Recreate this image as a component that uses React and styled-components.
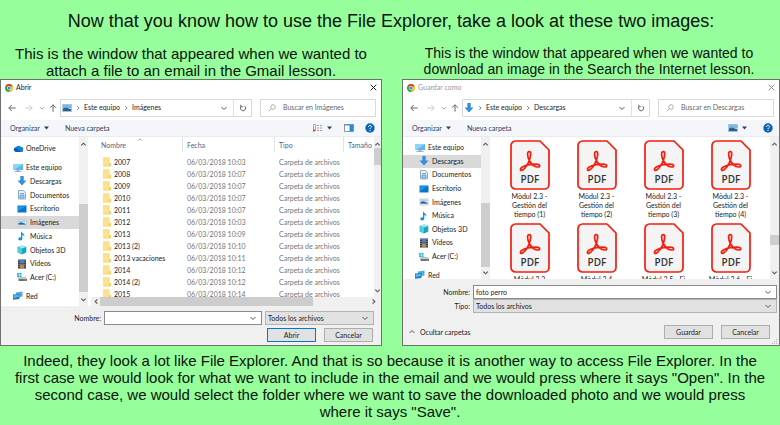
import React from "react";
import styled, { createGlobalStyle, css } from "styled-components";

const GlobalStyle = createGlobalStyle`
  *, *::before, *::after { box-sizing: border-box; }
  body {
    margin: 0;
    background: #96ff9b;
    color: #0b130b;
    font-family: "Liberation Sans", Arial, sans-serif;
  }
  svg { display: block; flex: none; }
`;

/* ---------- lesson page ---------- */

const Page = styled.main`
  display: flex;
  flex-direction: column;
  overflow: hidden;
`;

const Title = styled.h1`
  margin: 0;
  padding: 10px 0 0 2px;
  font-size: 18px;
  line-height: 22px;
  font-weight: 400;
  text-align: center;
`;

const Comparison = styled.section`
  display: grid;
  grid-template-columns: 382fr 378fr;
  column-gap: 20px;
  padding-top: 13px;
`;

const Example = styled.figure`
  margin: 0;
  min-width: 0;
  display: flex;
  flex-direction: column;
`;

const Caption = styled.figcaption`
  height: 34px;
  text-align: center;
  font-size: ${(p) => (p.$compact ? 14 : 15)}px;
  line-height: ${(p) => (p.$compact ? 16 : 17)}px;
  padding: ${(p) => (p.$compact ? "0 18px 0 14px" : "0 12px")};
`;

const Conclusion = styled.p`
  margin: 0;
  padding: 6px 14px 5px;
  font-size: 15px;
  line-height: 17px;
  text-align: center;
`;

/* ---------- dialog frame ---------- */

const Dialog = styled.section`
  display: flex;
  flex-direction: column;
  border: 1px solid #6f716f;
  background: #fff;
  color: #1c1c1c;
  font-family: Lato, "Open Sans", sans-serif;
  font-size: 7px;
  line-height: 9px;

  button, input, select { font: inherit; color: inherit; }
`;

const TitleBar = styled.header`
  display: flex;
  align-items: center;
  gap: 3px;
  height: 15px;
  padding: 0 4px;
  color: ${(p) => (p.$inactive ? "#999" : "#222")};
`;

const TitleText = styled.span`
  flex: 1;
`;

const PlainButton = styled.button`
  display: flex;
  align-items: center;
  justify-content: ${(p) => p.$justify || "center"};
  gap: 4px;
  min-width: ${(p) => p.$width || 0}px;
  padding: 0;
  border: 0;
  background: none;
`;

const AddressRow = styled.nav`
  display: flex;
  align-items: center;
  gap: 8px;
  height: 25px;
  padding: 0 5px 0 2px;
`;

const Arrows = styled.div`
  display: grid;
  grid-template-columns: 17px 17px 9px 14px;
  margin-right: -8px;
`;

const AddressBox = styled.div`
  flex: 1;
  display: flex;
  align-items: center;
  height: 18px;
  border: 1px solid #d9d9d9;
  padding-left: 1px;
`;

const Crumb = styled.a`
  color: #1c1c1c;
  text-decoration: none;
`;

const CrumbArrow = styled.span`
  width: 12px;
  display: flex;
  justify-content: center;
`;

const Spacer = styled.div`
  flex: 1;
`;

const RefreshButton = styled(PlainButton)`
  align-self: stretch;
  width: 18px;
  border-left: 1px solid #e1e1e1;
`;

const SearchBox = styled.label`
  display: flex;
  align-items: center;
  gap: 7px;
  width: 116px;
  height: 18px;
  padding-left: 7px;
  border: 1px solid #d9d9d9;
`;

const SearchInput = styled.input`
  flex: 1;
  min-width: 0;
  padding: 0;
  border: 0;
  outline: 0;
  background: none;
  &::placeholder { color: #686868; opacity: 1; }
`;

const Toolbar = styled.div`
  display: flex;
  align-items: center;
  height: 17px;
  padding: 0 6px 0 9px;
  background: #f4f6f9;
  border-bottom: 1px solid #e9ebee;
  color: #2a3f66;
`;

const ToolbarItem = styled(PlainButton)`
  margin-left: ${(p) => p.$before || 0}px;
`;

/* ---------- dialog body ---------- */

const Body = styled.div`
  display: flex;
  height: ${(p) => p.$height}px;
  overflow: hidden;
`;

const Tree = styled.ul`
  display: flex;
  flex-direction: column;
  flex: none;
  width: 78px;
  height: calc(100% + ${(p) => p.$overflow || 0}px);
  margin: 0;
  padding: ${(p) => p.$padding};
  list-style: none;
`;

const TreeRow = styled.li`
  flex: 1 1 0;
  display: flex;
  margin-top: ${(p) => p.$before || 0}px;
  background: ${(p) => (p.$selected ? "#d9d9d9" : "transparent")};
`;

const TreeLink = styled.a`
  flex: 1;
  display: flex;
  align-items: center;
  gap: 3px;
  padding-left: ${(p) => (p.$nested ? 16 : 12)}px;
  color: #1c1c1c;
  text-decoration: none;
  white-space: nowrap;
`;

const ScrollTrack = styled.div`
  flex: none;
  display: flex;
  align-items: center;
  justify-content: space-between;
  background: #f0f0f0;
  ${(p) =>
    p.$horizontal
      ? css`
          height: 9px;
          padding: 0 4px 0 2px;
        `
      : css`
          flex-direction: column;
          width: ${p.$width || 9}px;
          padding: 4px 0 3px;
        `}
`;

const ScrollRun = styled.div`
  flex: 1;
  align-self: stretch;
  display: flex;
  flex-direction: ${(p) => (p.$horizontal ? "row" : "column")};
`;

const Thumb = styled.div`
  background: #cdcdcd;
  flex: ${(p) => p.$share} 1 0;
`;

const ScrollGap = styled.div`
  flex: ${(p) => p.$share} 1 0;
`;

const ListPane = styled.div`
  flex: 1;
  min-width: 0;
  display: flex;
  flex-direction: column;
  padding-left: ${(p) => p.$inset || 0}px;
`;

const ListView = styled.div`
  flex: 1;
  min-height: 0;
  display: flex;
  overflow: hidden;
`;

const TableClip = styled.div`
  flex: 1;
  min-width: 0;
  overflow: hidden;
`;

const FileTable = styled.table`
  width: 100%;
  table-layout: fixed;
  border-collapse: separate;
  border-spacing: 0;
  white-space: nowrap;
`;

const HeadCell = styled.th`
  position: relative;
  width: ${(p) => (p.$width ? `${p.$width}px` : "auto")};
  height: 15px;
  padding: 2px 0 0 ${(p) => p.$pad}px;
  border-right: ${(p) => (p.$width ? "1px solid #e2e2e2" : "0")};
  color: #4d6484;
  font-weight: 400;
  text-align: left;
`;

const SortMark = styled.span`
  position: absolute;
  top: 0;
  left: 50%;
`;

const Cell = styled.td`
  height: 12px;
  padding: 0 0 0 ${(p) => p.$pad}px;
  color: #747474;
`;

const HeadGap = styled.td`
  height: 4px;
  padding: 0;
`;

const FileName = styled.span`
  display: flex;
  align-items: center;
  gap: 3px;
  color: #1c1c1c;
`;

const TileGrid = styled.div`
  flex: 1;
  min-width: 0;
  display: grid;
  grid-template-columns: repeat(4, 67px);
  grid-auto-rows: 83px;
  padding: 3px 0 0 6px;
  overflow: hidden;
`;

const Tile = styled.div`
  display: flex;
  flex-direction: column;
  align-items: center;
  text-align: center;
`;

const TileName = styled.span`
  width: 46px;
  margin-top: 2px;
`;

/* ---------- dialog footer ---------- */

const Footer = styled.footer`
  display: flex;
  flex-direction: column;
  background: #f0f0f0;
  padding: ${(p) => p.$padding};
`;

const FieldRow = styled.div`
  display: grid;
  grid-template-columns: ${(p) => p.$columns};
  align-items: center;
  column-gap: ${(p) => p.$gap}px;
`;

const FieldLabel = styled.label`
  text-align: right;
`;

const Combo = styled.div`
  display: grid;
  grid-template-columns: 1fr 12px;
  align-items: center;
  height: 14px;
  border: 1px solid ${(p) => (p.$grey ? "#b4b4b4" : "#8a8a8a")};
  background: ${(p) => (p.$grey ? "#e1e1e1" : "#fff")};

  > input, > select {
    grid-column: 1 / 3;
    grid-row: 1;
    width: 100%;
    min-width: 0;
    height: 12px;
    padding: 0 12px 0 2px;
    border: 0;
    outline: 0;
    appearance: none;
    background: none;
  }
  > svg {
    grid-column: 2;
    grid-row: 1;
    pointer-events: none;
  }
`;

const Actions = styled.div`
  display: flex;
  align-items: center;
  justify-content: flex-end;
  gap: 8px;
`;

const OpenActions = styled(Actions)`
  padding: 3px 1px 0 0;
`;

const SaveActions = styled.div`
  display: flex;
  align-items: center;
  padding: 12px 7px 0 5px;
`;

const ActionButton = styled.button`
  width: 49px;
  height: 14px;
  padding: 0;
  border: 1px solid ${(p) => (p.$primary ? "#0078d7" : "#adadad")};
  background: #e1e1e1;
`;

const Grip = styled.div`
  display: flex;
  justify-content: flex-end;
`;

/* ---------- icons ---------- */

const paths = {
  up: "M1.5 5 4 2.5 6.5 5",
  down: "M1.5 3 4 5.5 6.5 3",
  left: "M5 1.5 2.5 4 5 6.5",
  right: "M3 1.5 5.5 4 3 6.5",
};

const Chevron = ({ to, color = "#555", size = 8, weight = 1 }) => (
  <svg width={size} height={size} viewBox="0 0 8 8" fill="none" stroke={color} strokeWidth={weight}>
    <path d={paths[to]} />
  </svg>
);

const Caret = () => (
  <svg width="5" height="4" viewBox="0 0 5 4"><path d="M0 .5h5L2.5 3.5z" fill="#2a3f66" /></svg>
);

const Arrow = ({ turn = 0, color = "#666" }) => (
  <svg width="8" height="8" viewBox="0 0 8 8" fill="none" stroke={color}>
    <path d="M7.7 4H.8M3.8 1 .8 4l3 3" transform={`rotate(${turn} 4 4)`} />
  </svg>
);

const ChromeLogo = () => (
  <svg width="8" height="8" viewBox="0 0 16 16">
    <circle cx="8" cy="8" r="8" fill="#fbc116" />
    <path d="M8 8 1.1 4A8 8 0 0 1 15 4z" fill="#e33b2e" />
    <path d="M8 8 1.1 4A8 8 0 0 0 7.5 16L11 10z" fill="#2da94f" />
    <circle cx="8" cy="8" r="4" fill="#fff" />
    <circle cx="8" cy="8" r="3" fill="#3f7ee8" />
  </svg>
);

const CloseIcon = ({ color }) => (
  <svg width="7" height="7" viewBox="0 0 7 7" stroke={color}><path d="m.7.7 5.6 5.6m0-5.6L.7 6.3" /></svg>
);

const RefreshIcon = () => (
  <svg width="8" height="8" viewBox="0 0 8 8" fill="none" stroke="#666">
    <path d="M5.7 2.1a2.6 2.6 0 1 1-3.2 0M1.8.7v2h2" />
  </svg>
);

const SearchIcon = () => (
  <svg width="8" height="8" viewBox="0 0 8 8" fill="none" stroke="#9a9a9a" strokeWidth=".8">
    <circle cx="5" cy="3" r="2.3" /><path d="M3.3 4.7.7 7.3" />
  </svg>
);

const HelpIcon = () => (
  <svg width="10" height="10" viewBox="0 0 10 10">
    <circle cx="5" cy="5" r="4.7" fill="#0b63b8" />
    <path d="M3.5 3.9C3.5 1.8 6.6 2 6.5 3.8 6.4 4.8 5 4.9 5 6.1M5 6.9V8" fill="none" stroke="#fff" />
  </svg>
);

const ListViewIcon = () => (
  <svg width="10" height="8" viewBox="0 0 10 8">
    <path d="M.5.5h2v6h-2z" fill="#fff" stroke="#8a929c" strokeWidth=".8" />
    <path d="M0 5.5h2v2H0z" fill="#d9412f" />
    <path d="M4 1.5h2M7 1.5h2M4 4h2M7 4h2M4 6.5h2M7 6.5h2" stroke="#9aa0a8" />
  </svg>
);

const PaneIcon = () => (
  <svg width="10" height="8" viewBox="0 0 10 8">
    <path d="M.5.5h9v7h-9z" fill="#fff" stroke="#8793a0" />
    <path d="M5.5 1H9v6H5.5z" fill="#1a8fe3" /><path d="M0 1h10" stroke="#6f87a0" />
  </svg>
);

const treeArt = {
  cloud: (
    <>
      <path d="M3 8a2.3 2.3 0 0 1-.2-4.5A3 3 0 0 1 8 3a2.500 2.500 0 0 1 .5 5z" fill="#1283d8" />
      <path d="M1 6.500A2 2 0 0 1 2.800 3.500L7.800 8H3z" fill="#0a5fb4" />
    </>
  ),
  computer: (
    <>
      <path d="M0 1h10v6H0z" fill="#5eb8ee" /><path d="M0 1h10L1 7H0z" fill="#8ed4f8" />
      <path d="M3.5 7h3v1h2v1h-7V8h2z" fill="#9fb2c1" />
    </>
  ),
  download: <path d="M3.3 0h3.4v4.500h2.800L5 9.500.5 4.500h2.800z" fill="#3391dc" />,
  document: (
    <>
      <path d="M1.5.5h5L8.500 3v6h-7z" fill="#eaf3fa" stroke="#93a9bb" />
      <path d="M3 3.500h4M3 5h4v3H3z" stroke="#4c95cc" fill="#a8cfec" strokeWidth=".8" />
    </>
  ),
  desktop: (
    <>
      <path d="M.5 1.500h9v7h-9z" fill="#0b74c9" /><path d="M1 2.200h8L1 7z" fill="#1c97ec" />
    </>
  ),
  picture: (
    <>
      <path d="M.9 1.900h8.200v6.200H.9z" fill="#f2f6f9" stroke="#b4c0ca" strokeWidth=".7" />
      <path d="M1.500 2.500h7v2h-7z" fill="#9fd0f3" />
      <path d="M1.500 5 4 4.200l4.500 1.600v1H1.500z" fill="#2c66a0" />
    </>
  ),
  photo: (
    <>
      <path d="M.4 1.500h9.200v7H.4z" fill="#cfe3f3" stroke="#8fa9bf" strokeWidth=".7" />
      <path d="M1 2h8v3H1z" fill="#79b9ea" /><path d="M1 5.500 4 4.500l5 1.800V8H1z" fill="#2c5f92" />
    </>
  ),
  music: <path d="M4.5.5c.4 2 3.5 2.4 2.8 5.3-.3-1.2-1.1-1.7-2-1.9v3.8A2 1.6 0 1 1 4 6.3V.5z" fill="#1692e0" />,
  cube: (
    <>
      <path d="M.7 2 5 .5 9.3 2v5.6L5 9.5.7 7.6z" fill="#18a5bf" />
      <path d="M.7 2 5 .5 9.3 2 5 3.4z" fill="#a3e9f1" /><path d="M.7 2 5 3.4v6L.7 7.6z" fill="#52ccdc" />
    </>
  ),
  video: (
    <>
      <path d="M1 .5h8v9H1z" fill="#3b3f49" />
      <path d="M2 1v8M8 1v8" stroke="#bcc2ca" strokeWidth=".8" strokeDasharray="1 1" />
      <path d="M3 1h4v3.5H3z" fill="#4a7fc9" /><path d="M3 5.3h4V9H3z" fill="#b48a4e" />
    </>
  ),
  drive: (
    <>
      <path d="M0 1h2v1.7H0zM2.5 1h2v1.7h-2zM0 3.2h2v1.7H0zM2.5 3.2h2v1.7h-2z" fill="#29aee6" />
      <path d="M1.5 5.5h7L10 7v2H1.5z" fill="#6c747b" /><path d="M1.5 5.5h7L10 7H2z" fill="#c3c9cd" />
      <path d="M7.5 8h1.5" stroke="#4ee04a" />
    </>
  ),
  network: (
    <>
      <path d="M3 1.5 9.5.5v5L3 6.5z" fill="#55a9de" /><path d="M0 3.5 6.5 3v5L0 8.7z" fill="#1d78bd" />
      <path d="M.6 4.2 5.9 3.7v2L.6 7.4z" fill="#59b4ec" />
    </>
  ),
};

const TreeIcon = ({ name }) => (
  <svg width="10" height="10" viewBox="0 0 10 10">{treeArt[name]}</svg>
);

const FolderIcon = () => (
  <svg width="8" height="10" viewBox="0 0 8 10">
    <path d="M0 .5h6.5V6H8v3.5H0z" fill="#f5cf62" /><path d="M0 .5h6v8.3H0z" fill="#ffe08a" />
  </svg>
);

const PdfIcon = () => (
  <svg width="40" height="50" viewBox="0 0 40 50">
    <path d="M5.500 1H30l9 9v34.500a4.500 4.500 0 0 1-4.500 4.500h-29A4.500 4.500 0 0 1 1 44.500v-39A4.500 4.500 0 0 1 5.500 1z" fill="#f4f4f4" stroke="#f71b0d" strokeWidth="1.700" />
    <path
      d="M19.300 11.500c-2.600 0-1.900 5 0 9-1.800 4.500-4.600 8.300-7 9.700-2.200 1-2.600-1.300-.7-2.700 3.900-2.500 9-3.300 14.600-3.300 4.200 0 4.500 3.100 1.400 2.800-4-.6-6.800-3.500-8.300-6.500 1.500-4 2.200-9 0-9z"
      fill="none" stroke="#f71b0d" strokeWidth="1.700" strokeLinejoin="round"
    />
    <text x="20" y="43" textAnchor="middle" fontFamily="Open Sans" fontSize="10" fontWeight="600" fill="#363636">PDF</text>
  </svg>
);

const GripIcon = () => (
  <svg width="5" height="5" viewBox="0 0 5 5" fill="#b5b5b5">
    <path d="M4 0h1v1H4zM2 2h1v1H2zM4 2h1v1H4zM0 4h1v1H0zM2 4h1v1H2zM4 4h1v1H4z" />
  </svg>
);

/* ---------- shared dialog parts ---------- */

const DialogTitle = ({ children, inactive }) => (
  <TitleBar $inactive={inactive}>
    <ChromeLogo />
    <TitleText>{children}</TitleText>
    <PlainButton aria-label="Cerrar"><CloseIcon color={inactive ? "#8a8a8a" : "#222"} /></PlainButton>
  </TitleBar>
);

const AddressBar = ({ icon, folder }) => (
  <AddressRow>
    <Arrows>
      <PlainButton aria-label="Atrás"><Arrow /></PlainButton>
      <PlainButton aria-label="Adelante"><Arrow turn={180} color="#c9c9c9" /></PlainButton>
      <PlainButton aria-label="Recientes"><Chevron to="down" size={6} color="#777" /></PlainButton>
      <PlainButton aria-label="Subir"><Arrow turn={90} /></PlainButton>
    </Arrows>
    <AddressBox>
      <TreeIcon name={icon} />
      <CrumbArrow><Chevron to="right" size={6} /></CrumbArrow>
      <Crumb href="#equipo">Este equipo</Crumb>
      <CrumbArrow><Chevron to="right" size={6} /></CrumbArrow>
      <Crumb href="#carpeta">{folder}</Crumb>
      <Spacer />
      <PlainButton aria-label="Historial" $width={18}><Chevron to="down" size={8} /></PlainButton>
      <RefreshButton aria-label="Actualizar"><RefreshIcon /></RefreshButton>
    </AddressBox>
    <SearchBox>
      <SearchIcon />
      <SearchInput type="text" placeholder={`Buscar en ${folder}`} />
    </SearchBox>
  </AddressRow>
);

const ScrollBar = ({ horizontal, width, before, size, after }) => (
  <ScrollTrack $horizontal={horizontal} $width={width}>
    <Chevron to={horizontal ? "left" : "up"} size={7} weight={1.3} />
    <ScrollRun $horizontal={horizontal}>
      <ScrollGap $share={before} />
      <Thumb $share={size} />
      <ScrollGap $share={after} />
    </ScrollRun>
    <Chevron to={horizontal ? "right" : "down"} size={7} weight={1.3} />
  </ScrollTrack>
);

const places = [
  { name: "Este equipo", icon: "computer" },
  { name: "Descargas", icon: "download", nested: true },
  { name: "Documentos", icon: "document", nested: true },
  { name: "Escritorio", icon: "desktop", nested: true },
  { name: "Imágenes", icon: "picture", nested: true },
  { name: "Música", icon: "music", nested: true },
  { name: "Objetos 3D", icon: "cube", nested: true },
  { name: "Vídeos", icon: "video", nested: true },
  { name: "Acer (C:)", icon: "drive", nested: true },
  { name: "Red", icon: "network", before: 5 },
];

const FolderTree = ({ items, selected, padding, overflow }) => (
  <Tree $padding={padding} $overflow={overflow}>
    {items.map((item) => (
      <TreeRow key={item.name} $selected={item.name === selected} $before={item.before}>
        <TreeLink href="#lugar" $nested={item.nested}>
          <TreeIcon name={item.icon} />
          {item.name}
        </TreeLink>
      </TreeRow>
    ))}
  </Tree>
);

const TypeSelect = ({ id, label }) => (
  <>
    <select id={id} aria-label={label} defaultValue="all">
      <option value="all">Todos los archivos</option>
    </select>
    <Chevron to="down" />
  </>
);

/* ---------- the two dialogs ---------- */

const folders = [
  ["2007", "10:03"],
  ["2008", "10:07"],
  ["2009", "10:07"],
  ["2010", "10:07"],
  ["2011", "10:07"],
  ["2012", "10:03"],
  ["2013", "10:09"],
  ["2013 (2)", "10:10"],
  ["2013 vacaciones", "10:11"],
  ["2014", "10:12"],
  ["2014 (2)", "10:12"],
  ["2015", "10:14"],
];

const openPlaces = [
  { name: "OneDrive", icon: "cloud" },
  { ...places[0], before: 5 },
  ...places.slice(1),
];

const OpenDialog = () => (
  <Dialog aria-label="Abrir">
    <DialogTitle>Abrir</DialogTitle>
    <AddressBar icon="photo" folder="Imágenes" />
    <Toolbar>
      <ToolbarItem>Organizar <Caret /></ToolbarItem>
      <ToolbarItem $before={16}>Nueva carpeta</ToolbarItem>
      <Spacer />
      <ToolbarItem aria-label="Vista"><ListViewIcon /><Caret /></ToolbarItem>
      <ToolbarItem $before={12} aria-label="Panel"><PaneIcon /></ToolbarItem>
      <ToolbarItem $before={11} aria-label="Ayuda"><HelpIcon /></ToolbarItem>
    </Toolbar>
    <Body $height={169}>
      <FolderTree items={openPlaces} selected="Imágenes" padding="5px 0 3px" />
      <ScrollBar before={56} size={88} after={4} />
      <ListPane $inset={3}>
        <ListView>
          <TableClip>
            <FileTable>
              <thead>
                <tr>
                  <HeadCell $width={92} $pad={10}>
                    Nombre
                    <SortMark><Chevron to="up" size={6} color="#888" /></SortMark>
                  </HeadCell>
                  <HeadCell $width={92} $pad={4}>Fecha</HeadCell>
                  <HeadCell $width={69} $pad={4}>Tipo</HeadCell>
                  <HeadCell $pad={4}>Tamaño</HeadCell>
                </tr>
              </thead>
              <tbody>
                <tr><HeadGap colSpan={4} /></tr>
                {folders.map(([name, time]) => (
                  <tr key={name}>
                    <Cell $pad={12}><FileName><FolderIcon />{name}</FileName></Cell>
                    <Cell $pad={4}>06/03/2018 {time}</Cell>
                    <Cell $pad={4}>Carpeta de archivos</Cell>
                    <Cell $pad={4} />
                  </tr>
                ))}
              </tbody>
            </FileTable>
          </TableClip>
          <ScrollBar width={7} before={0} size={17} after={124} />
        </ListView>
        <ScrollBar horizontal before={0} size={209} after={56} />
      </ListPane>
    </Body>
    <Footer $padding="5px 7px 3px 0">
      <FieldRow $columns="100px 1fr 109px" $gap={3}>
        <FieldLabel htmlFor="open-name">Nombre:</FieldLabel>
        <Combo>
          <input id="open-name" type="text" />
          <Chevron to="down" />
        </Combo>
        <Combo $grey>
          <TypeSelect label="Tipo de archivo" />
        </Combo>
      </FieldRow>
      <OpenActions>
        <ActionButton $primary>Abrir</ActionButton>
        <ActionButton>Cancelar</ActionButton>
      </OpenActions>
    </Footer>
  </Dialog>
);

const documents = [
  "Mòdul 2.3 - Gestión del tiempo (1)",
  "Mòdul 2.3 - Gestión del tiempo (2)",
  "Mòdul 2.3 - Gestión del tiempo (3)",
  "Mòdul 2.3 - Gestión del tiempo (4)",
  "Mòdul 2.3",
  "Mòdul 2.4",
  "Mòdul 2.5 - Ej",
  "Mòdul 2.6 - Ej",
];

const SaveDialog = () => (
  <Dialog aria-label="Guardar como">
    <DialogTitle inactive>Guardar como</DialogTitle>
    <AddressBar icon="download" folder="Descargas" />
    <Toolbar>
      <ToolbarItem>Organizar <Caret /></ToolbarItem>
      <ToolbarItem $before={16}>Nueva carpeta</ToolbarItem>
      <Spacer />
      <ToolbarItem aria-label="Vista"><TreeIcon name="photo" /><Caret /></ToolbarItem>
      <ToolbarItem $before={16} aria-label="Ayuda"><HelpIcon /></ToolbarItem>
    </Toolbar>
    <Body $height={142}>
      <FolderTree items={places} selected="Descargas" padding="4px 0 0" overflow={3} />
      <ScrollBar before={55} size={63} after={2} />
      <ListPane>
        <ListView>
          <TileGrid>
            {documents.map((name) => (
              <Tile key={name}>
                <PdfIcon />
                <TileName>{name}</TileName>
              </Tile>
            ))}
          </TileGrid>
          <ScrollBar before={86} size={9} after={24} />
        </ListView>
      </ListPane>
    </Body>
    <Footer $padding="6px 2px 1px 0">
      <FieldRow $columns="67px 1fr" $gap={3}>
        <FieldLabel htmlFor="save-name">Nombre:</FieldLabel>
        <Combo>
          <input id="save-name" type="text" defaultValue="foto perro" />
          <Chevron to="down" />
        </Combo>
        <FieldLabel htmlFor="save-type">Tipo:</FieldLabel>
        <Combo $grey>
          <TypeSelect id="save-type" />
        </Combo>
      </FieldRow>
      <SaveActions>
        <PlainButton><Chevron to="up" />Ocultar carpetas</PlainButton>
        <Spacer />
        <Actions>
          <ActionButton>Guardar</ActionButton>
          <ActionButton>Cancelar</ActionButton>
        </Actions>
      </SaveActions>
      <Grip><GripIcon /></Grip>
    </Footer>
  </Dialog>
);

export default function App() {
  return (
    <>
      <GlobalStyle />
      <Page>
        <Title>Now that you know how to use the File Explorer, take a look at these two images:</Title>
        <Comparison>
          <Example>
            <Caption>This is the window that appeared when we wanted to attach a file to an email in the Gmail lesson.</Caption>
            <OpenDialog />
          </Example>
          <Example>
            <Caption $compact>This is the window that appeared when we wanted to download an image in the Search the Internet lesson.</Caption>
            <SaveDialog />
          </Example>
        </Comparison>
        <Conclusion>
          Indeed, they look a lot like File Explorer. And that is so because it is another way to access File
          Explorer. In the first case we would look for what we want to include in the email and we would press
          where it says "Open". In the second case, we would select the folder where we want to save the
          downloaded photo and we would press where it says "Save".
        </Conclusion>
      </Page>
    </>
  );
}
